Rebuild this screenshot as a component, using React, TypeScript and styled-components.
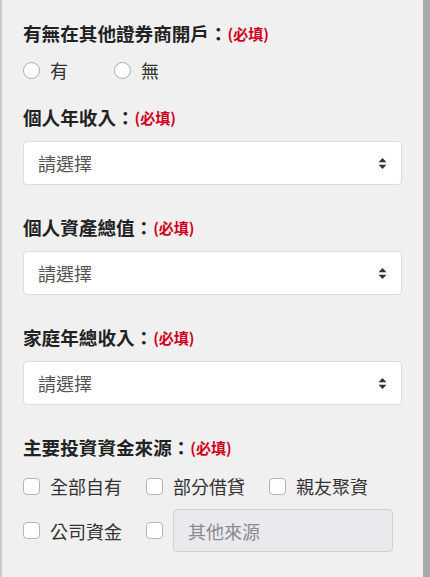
import { createGlobalStyle, styled } from "styled-components";

const GlobalStyle = createGlobalStyle`
  html, body {
    margin: 0;
    padding: 0;
  }
  body {
    font-family: "Noto Sans CJK TC", "Noto Sans", sans-serif;
    background: #f0f0f0;
  }
  * {
    box-sizing: border-box;
  }
`;

const SELECTS = ["個人年收入", "個人資產總值", "家庭年總收入"];

const SOURCES = ["全部自有", "部分借貸", "親友聚資"];

export default function App() {
  return (
    <SPage>
      <GlobalStyle />
      <SField $space={23}>
        <SLabel>
          有無在其他證券商開戶：<SRequired>(必填)</SRequired>
        </SLabel>
        <SRadioRow>
          <SOption $width={91}>
            <SRadio type="radio" name="other" />
            有
          </SOption>
          <SOption>
            <SRadio type="radio" name="other" />
            無
          </SOption>
        </SRadioRow>
      </SField>

      {SELECTS.map((label) => (
        <SField key={label} $space={30}>
          <SLabel>
            {label}：<SRequired>(必填)</SRequired>
          </SLabel>
          <SSelectWrap>
            <SSelect defaultValue="">
              <option value="">請選擇</option>
            </SSelect>
            <SArrows width="9" height="13" viewBox="0 0 9 13">
              <path d="M4.5 1 L8.5 5.2 H0.5 Z" fill="#333" />
              <path d="M4.5 12 L8.5 7.8 H0.5 Z" fill="#333" />
            </SArrows>
          </SSelectWrap>
        </SField>
      ))}

      <SField $space={24}>
        <SLabel>
          主要投資資金來源：<SRequired>(必填)</SRequired>
        </SLabel>
        <SCheckRow>
          {SOURCES.map((s) => (
            <SOption key={s} $width={123}>
              <SCheck type="checkbox" />
              {s}
            </SOption>
          ))}
        </SCheckRow>
        <SCheckRow $tall>
          <SOption $width={123}>
            <SCheck type="checkbox" />
            公司資金
          </SOption>
          <SOption>
            <SCheck type="checkbox" />
            <SOther placeholder="其他來源" disabled />
          </SOption>
        </SCheckRow>
      </SField>
    </SPage>
  );
}

const SPage = styled.div`
  min-height: 100vh;
  background: #f0f0f0;
  border-left: 2px solid #cbcbcb;
  border-right: 7px solid #a9a9a9;
  padding: 21px 21px 0;
  display: flex;
  flex-direction: column;
`;

const SField = styled.div<{ $space: number }>`
  display: flex;
  flex-direction: column;
  padding-bottom: ${({ $space }) => $space}px;
`;

const SLabel = styled.div`
  display: flex;
  align-items: center;
  height: 24px;
  font-size: 18.6px;
  line-height: 24px;
  font-weight: bold;
  color: #222;
  white-space: nowrap;
`;

const SRequired = styled.span`
  font-size: 15px;
  line-height: 1;
  font-weight: bold;
  color: #d0021b;
  margin-top: 1px;
`;

const SRadioRow = styled.div`
  display: flex;
  align-items: center;
  margin-top: 13px;
  height: 24px;
`;

const SOption = styled.label<{ $width?: number }>`
  display: flex;
  align-items: center;
  gap: 10px;
  width: ${({ $width }) => ($width ? `${$width}px` : "auto")};
  font-size: 18px;
  line-height: 24px;
  color: #333;
`;

const SRadio = styled.input`
  appearance: none;
  margin: 0;
  width: 17px;
  height: 17px;
  border: 1px solid #aaa;
  border-radius: 50%;
  background: #fff;
`;

const SCheck = styled.input`
  appearance: none;
  margin: 0;
  width: 17px;
  height: 17px;
  border: 1px solid #b5b5b5;
  border-radius: 4px;
  background: #fff;
  flex-shrink: 0;
`;

const SSelectWrap = styled.div`
  position: relative;
  margin-top: 12px;
`;

const SSelect = styled.select`
  appearance: none;
  width: 100%;
  height: 44px;
  padding: 0 40px 0 14px;
  background: #fff;
  border: 1px solid #dcdcdc;
  border-radius: 4px;
  font-family: inherit;
  font-size: 18px;
  color: #555;
  outline: none;
`;

const SArrows = styled.svg`
  position: absolute;
  right: 15px;
  top: 16px;
  pointer-events: none;
`;

const SCheckRow = styled.div<{ $tall?: boolean }>`
  display: flex;
  align-items: center;
  height: ${({ $tall }) => ($tall ? "43px" : "30px")};
  margin-top: ${({ $tall }) => ($tall ? "8px" : "12px")};
`;

const SOther = styled.input`
  width: 220px;
  height: 43px;
  padding: 0 14px;
  background: #e9eaed;
  border: 1px solid #cfd1d4;
  border-radius: 4px;
  font-family: inherit;
  font-size: 18px;
  color: #888;

  &::placeholder {
    color: #8a8a8a;
  }
`;
